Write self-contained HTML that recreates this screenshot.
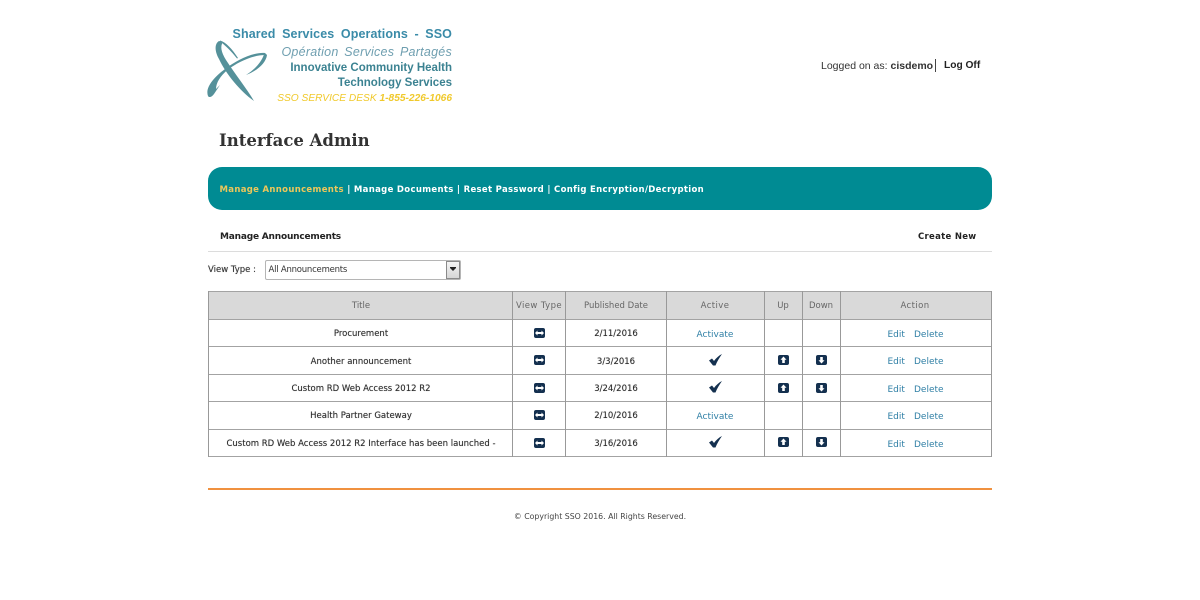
<!DOCTYPE html>
<html><head><meta charset="utf-8"><style>
html,body{margin:0;padding:0;background:#fff;width:1200px;height:600px;overflow:hidden}
body{position:relative;font-family:"DejaVu Sans",sans-serif;color:#333}
.a{position:absolute;white-space:nowrap;line-height:14px}
.c{text-align:center;transform:translateX(-50%)}
.l{font-family:"Liberation Sans",sans-serif;font-size:12px;right:748px}
.t{font-size:8.5px;color:#2b2b2b;text-shadow:0 0 .6px rgba(0,0,0,.45)}
.h{font-size:8.5px;color:#666}
.b{color:#2f7fa5;font-size:9px}
.v{position:absolute;top:291px;width:1px;height:166px;background:#999}
.z{position:absolute;left:208px;width:784px;height:1px;background:#a3a3a3}
svg{position:absolute}
</style></head><body>
<svg style="left:205px;top:38px" width="64" height="66" viewBox="0 0 64 66" fill="#55919a">
<path d="M14 3C9 6 10 14 14 21C21 36 35 53 49 63C42 51 30 36 21 22C16 14 15 8 18 4Z"/>
<path d="M15 2.5C21 4 27 11 33 20L32 20.5C26 13 20 7 15 3.5Z"/>
<path d="M3 58C0 50 8 40 20 31C32 22 48 14 60 15L62 17C48 16.500 33 24 23 31.500C15 38 11 45 11 51L15 47L9 56C7 59 4 60 3 58Z"/>
<path d="M62 17C61 25 52 33 41 37C49 32 56 25 59 16.500Z"/>
</svg>
<div class="a l" style="top:27px;font-size:12.5px;font-weight:bold;color:#3a8ba8;word-spacing:3px;letter-spacing:.1px">Shared Services Operations - SSO</div>
<div class="a l" style="top:45px;font-size:12.5px;font-style:italic;color:#6f9fb0;word-spacing:2px;letter-spacing:.25px">Opération Services Partagés</div>
<div class="a l" style="top:61px;font-size:11.5px;font-weight:bold;color:#3b8291">Innovative Community Health</div>
<div class="a l" style="top:76px;font-size:11.5px;font-weight:bold;color:#3b8291">Technology Services</div>
<div class="a l" style="top:92px;font-size:10.2px;font-style:italic;color:#f0c92c">SSO SERVICE DESK <b>1-855-226-1066</b></div>

<div class="a" style="left:821px;top:59px;font:10.5px/14px 'Liberation Sans',sans-serif;color:#333">Logged on as: <b>cisdemo</b></div>
<div class="a" style="left:935px;top:59px;width:1px;height:13px;background:#444"></div>
<div class="a" style="left:944px;top:59px;font:bold 10.2px/14px 'Liberation Sans',sans-serif;color:#222">Log Off</div>

<div class="a" style="left:219px;top:131px;font:bold 16.5px/20px 'DejaVu Serif','Liberation Serif',serif;color:#333">Interface Admin</div>

<div class="a" style="left:208px;top:167px;width:784px;height:43px;background:#008b93;border-radius:14px"></div>
<div class="a" style="left:219.5px;top:182.5px;font-size:8.5px;font-weight:bold;color:#fff;letter-spacing:.32px"><span style="color:#edc75a">Manage Announcements</span> | Manage Documents | Reset Password | Config Encryption/Decryption</div>

<div class="a" style="left:220px;top:230px;font-size:9px;font-weight:bold;color:#222;letter-spacing:-.2px">Manage Announcements</div>
<div class="a" style="left:918px;top:230px;font-size:8.5px;font-weight:bold;color:#222;letter-spacing:.3px">Create New</div>
<div class="a" style="left:208px;top:251px;width:784px;height:1px;background:#dcdcdc"></div>

<div class="a" style="left:208px;top:263px;font-size:8.5px;color:#333;text-shadow:0 0 .6px rgba(0,0,0,.5)">View Type :</div>
<div class="a" style="left:265px;top:260px;width:196px;height:20px;border:1px solid #b5b5b5;box-sizing:border-box;border-radius:2px;background:#fff"></div>
<div class="a" style="left:268.5px;top:263px;font-size:8.5px;color:#333;letter-spacing:-.22px">All Announcements</div>
<div class="a" style="left:446px;top:261px;width:14px;height:18px;box-sizing:border-box;border:1px solid #8a8a8a;background:linear-gradient(#f4f4f4,#d6d6d6)"></div>
<svg style="left:450px;top:267px" width="6" height="4"><path d="M0 0H6V1L3 4L0 1Z" fill="#222"/></svg>

<div class="a" style="left:208px;top:291px;width:784px;height:28px;background:#d9d9d9"></div>
<div class="z" style="top:291px"></div><div class="z" style="top:319px"></div><div class="z" style="top:346px"></div><div class="z" style="top:374px"></div><div class="z" style="top:401px"></div><div class="z" style="top:429px"></div><div class="z" style="top:456px"></div>
<div class="v" style="left:208px"></div><div class="v" style="left:512px"></div><div class="v" style="left:565px"></div><div class="v" style="left:666px"></div><div class="v" style="left:764px"></div><div class="v" style="left:802px"></div><div class="v" style="left:840px"></div><div class="v" style="left:991px"></div>

<div class="a c h" style="left:361px;top:299px">Title</div>
<div class="a c h" style="left:539px;top:299px;letter-spacing:.4px">View Type</div>
<div class="a c h" style="left:616px;top:299px">Published Date</div>
<div class="a c h" style="left:715px;top:299px;letter-spacing:.4px">Active</div>
<div class="a c h" style="left:783px;top:299px">Up</div>
<div class="a c h" style="left:821px;top:299px">Down</div>
<div class="a c h" style="left:915px;top:299px;letter-spacing:.4px">Action</div>

<div class="a c t" style="left:361px;top:327px">Procurement</div>
<div class="a c t" style="left:361px;top:355px">Another announcement</div>
<div class="a c t" style="left:361px;top:382px">Custom RD Web Access 2012 R2</div>
<div class="a c t" style="left:361px;top:409px">Health Partner Gateway</div>
<div class="a c t" style="left:361px;top:437px">Custom RD Web Access 2012 R2 Interface has been launched -</div>

<div class="a c t" style="left:616px;top:327px">2/11/2016</div>
<div class="a c t" style="left:616px;top:355px">3/3/2016</div>
<div class="a c t" style="left:616px;top:382px">3/24/2016</div>
<div class="a c t" style="left:616px;top:409px">2/10/2016</div>
<div class="a c t" style="left:616px;top:437px">3/16/2016</div>

<svg width="0" height="0"><defs>
<g id="w"><rect x="0" y="0" width="11" height="10" rx="2" fill="#14304f"/><path d="M1 5L3.500 2.500V4H7.500V2.500L10 5L7.500 7.500V6H3.500V7.500Z" fill="#fff"/></g>
<g id="u"><rect x="0" y="0" width="11" height="10" rx="2" fill="#14304f"/><path d="M5.500 1.500L8.500 4.800H6.800V8H4.200V4.800H2.500Z" fill="#fff"/></g>
<g id="d"><rect x="0" y="0" width="11" height="10" rx="2" fill="#14304f"/><path d="M5.500 8.500L8.500 5.200H6.800V2H4.200V5.200H2.500Z" fill="#fff"/></g>
<path id="k" d="M0 6.500L3 4.500L5 7C7 4 10 1.500 13 0C10.500 3.500 8 7.500 6.500 11.500H4Z" fill="#14304f"/>
</defs></svg>

<svg style="left:534px;top:328px" width="11" height="10"><use href="#w"/></svg>
<svg style="left:534px;top:355px" width="11" height="10"><use href="#w"/></svg>
<svg style="left:534px;top:383px" width="11" height="10"><use href="#w"/></svg>
<svg style="left:534px;top:410px" width="11" height="10"><use href="#w"/></svg>
<svg style="left:534px;top:438px" width="11" height="10"><use href="#w"/></svg>

<div class="a c b" style="left:715px;top:328px">Activate</div>
<div class="a c b" style="left:715px;top:410px">Activate</div>
<svg style="left:709px;top:354px" width="13" height="12"><use href="#k"/></svg>
<svg style="left:709px;top:381px" width="13" height="12"><use href="#k"/></svg>
<svg style="left:709px;top:436px" width="13" height="12"><use href="#k"/></svg>

<svg style="left:778px;top:355px" width="11" height="10"><use href="#u"/></svg>
<svg style="left:778px;top:383px" width="11" height="10"><use href="#u"/></svg>
<svg style="left:778px;top:437px" width="11" height="10"><use href="#u"/></svg>
<svg style="left:816px;top:355px" width="11" height="10"><use href="#d"/></svg>
<svg style="left:816px;top:383px" width="11" height="10"><use href="#d"/></svg>
<svg style="left:816px;top:437px" width="11" height="10"><use href="#d"/></svg>

<div class="a b" style="left:887.5px;top:328px">Edit</div><div class="a b" style="left:914px;top:328px">Delete</div>
<div class="a b" style="left:887.5px;top:355px">Edit</div><div class="a b" style="left:914px;top:355px">Delete</div>
<div class="a b" style="left:887.5px;top:383px">Edit</div><div class="a b" style="left:914px;top:383px">Delete</div>
<div class="a b" style="left:887.5px;top:410px">Edit</div><div class="a b" style="left:914px;top:410px">Delete</div>
<div class="a b" style="left:887.5px;top:438px">Edit</div><div class="a b" style="left:914px;top:438px">Delete</div>

<div class="a" style="left:208px;top:488px;width:784px;height:2px;background:#f0913f"></div>
<div class="a c" style="left:600px;top:510px;font-size:7.8px;color:#444">© Copyright SSO 2016. All Rights Reserved.</div>
</body></html>
